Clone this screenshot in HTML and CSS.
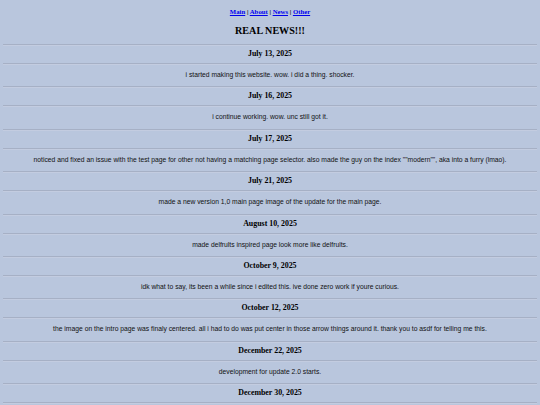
FILE: index.html
```html
<!DOCTYPE html>
<html lang="en">
<head>
    <meta charset="UTF-8">
    <title>News</title>
    <link rel="stylesheet" href="styles.css">
</head>
<body>
<nav class="nav">
    <a href="#">Main</a> | <a href="#">About</a> | <a href="#">News</a> | <a href="#">Other</a>
</nav>

<h1 class="title">REAL NEWS!!!</h1>

<div class="log">
    <div class="entry">
        <h2 class="date">July 13, 2025</h2>
        <p class="note">i started making this website. wow. i did a thing. shocker.</p>
    </div>
    <div class="entry">
        <h2 class="date">July 16, 2025</h2>
        <p class="note">i continue working. wow. unc still got it.</p>
    </div>
    <div class="entry">
        <h2 class="date">July 17, 2025</h2>
        <p class="note">noticed and fixed an issue with the test page for other not having a matching page selector. also made the guy on the index ""modern"", aka into a furry (lmao).</p>
    </div>
    <div class="entry">
        <h2 class="date">July 21, 2025</h2>
        <p class="note">made a new version 1,0 main page image of the update for the main page.</p>
    </div>
    <div class="entry">
        <h2 class="date">August 10, 2025</h2>
        <p class="note">made delfrults inspired page look more like delfrults.</p>
    </div>
    <div class="entry">
        <h2 class="date">October 9, 2025</h2>
        <p class="note">idk what to say, its been a while since i edited this. ive done zero work if youre curious.</p>
    </div>
    <div class="entry">
        <h2 class="date">October 12, 2025</h2>
        <p class="note">the image on the intro page was finaly centered. all i had to do was put center in those arrow things around it. thank you to asdf for telling me this.</p>
    </div>
    <div class="entry">
        <h2 class="date">December 22, 2025</h2>
        <p class="note">development for update 2.0 starts.</p>
    </div>
    <div class="entry">
        <h2 class="date">December 30, 2025</h2>
        <p class="note">&nbsp;</p>
    </div>
</div>
</body>
</html>
```
FILE: styles.css
```css
* {
    -webkit-font-smoothing: antialiased;
}

body {
    margin: 0 3.4px;
    background-color: #b9c6dd;
    color: #000;
    font-family: "Liberation Serif", "Times New Roman", serif;
    text-align: center;
}

.nav {
    margin-top: 8px;
    font-size: 6.75px;
    font-weight: bold;
    line-height: 8px;
}

.nav a {
    color: #0000ee;
}

.title {
    margin: 9px 0 0;
    font-size: 10.1px;
    line-height: 12px;
}

.log {
    margin-top: 7px;
}

/* thin inset rule above every date and every note */
.date,
.note {
    margin: 0;
    border-top: 1px solid #a6b0c5;
    box-shadow: inset 0 1px 0 #c3cce0;
}

.date {
    font-size: 7.9px;
    line-height: 18px;
}

.note {
    font-family: "Liberation Sans", Arial, sans-serif;
    font-size: 6.75px;
    line-height: 22.4px;
    color: #111;
}
```
